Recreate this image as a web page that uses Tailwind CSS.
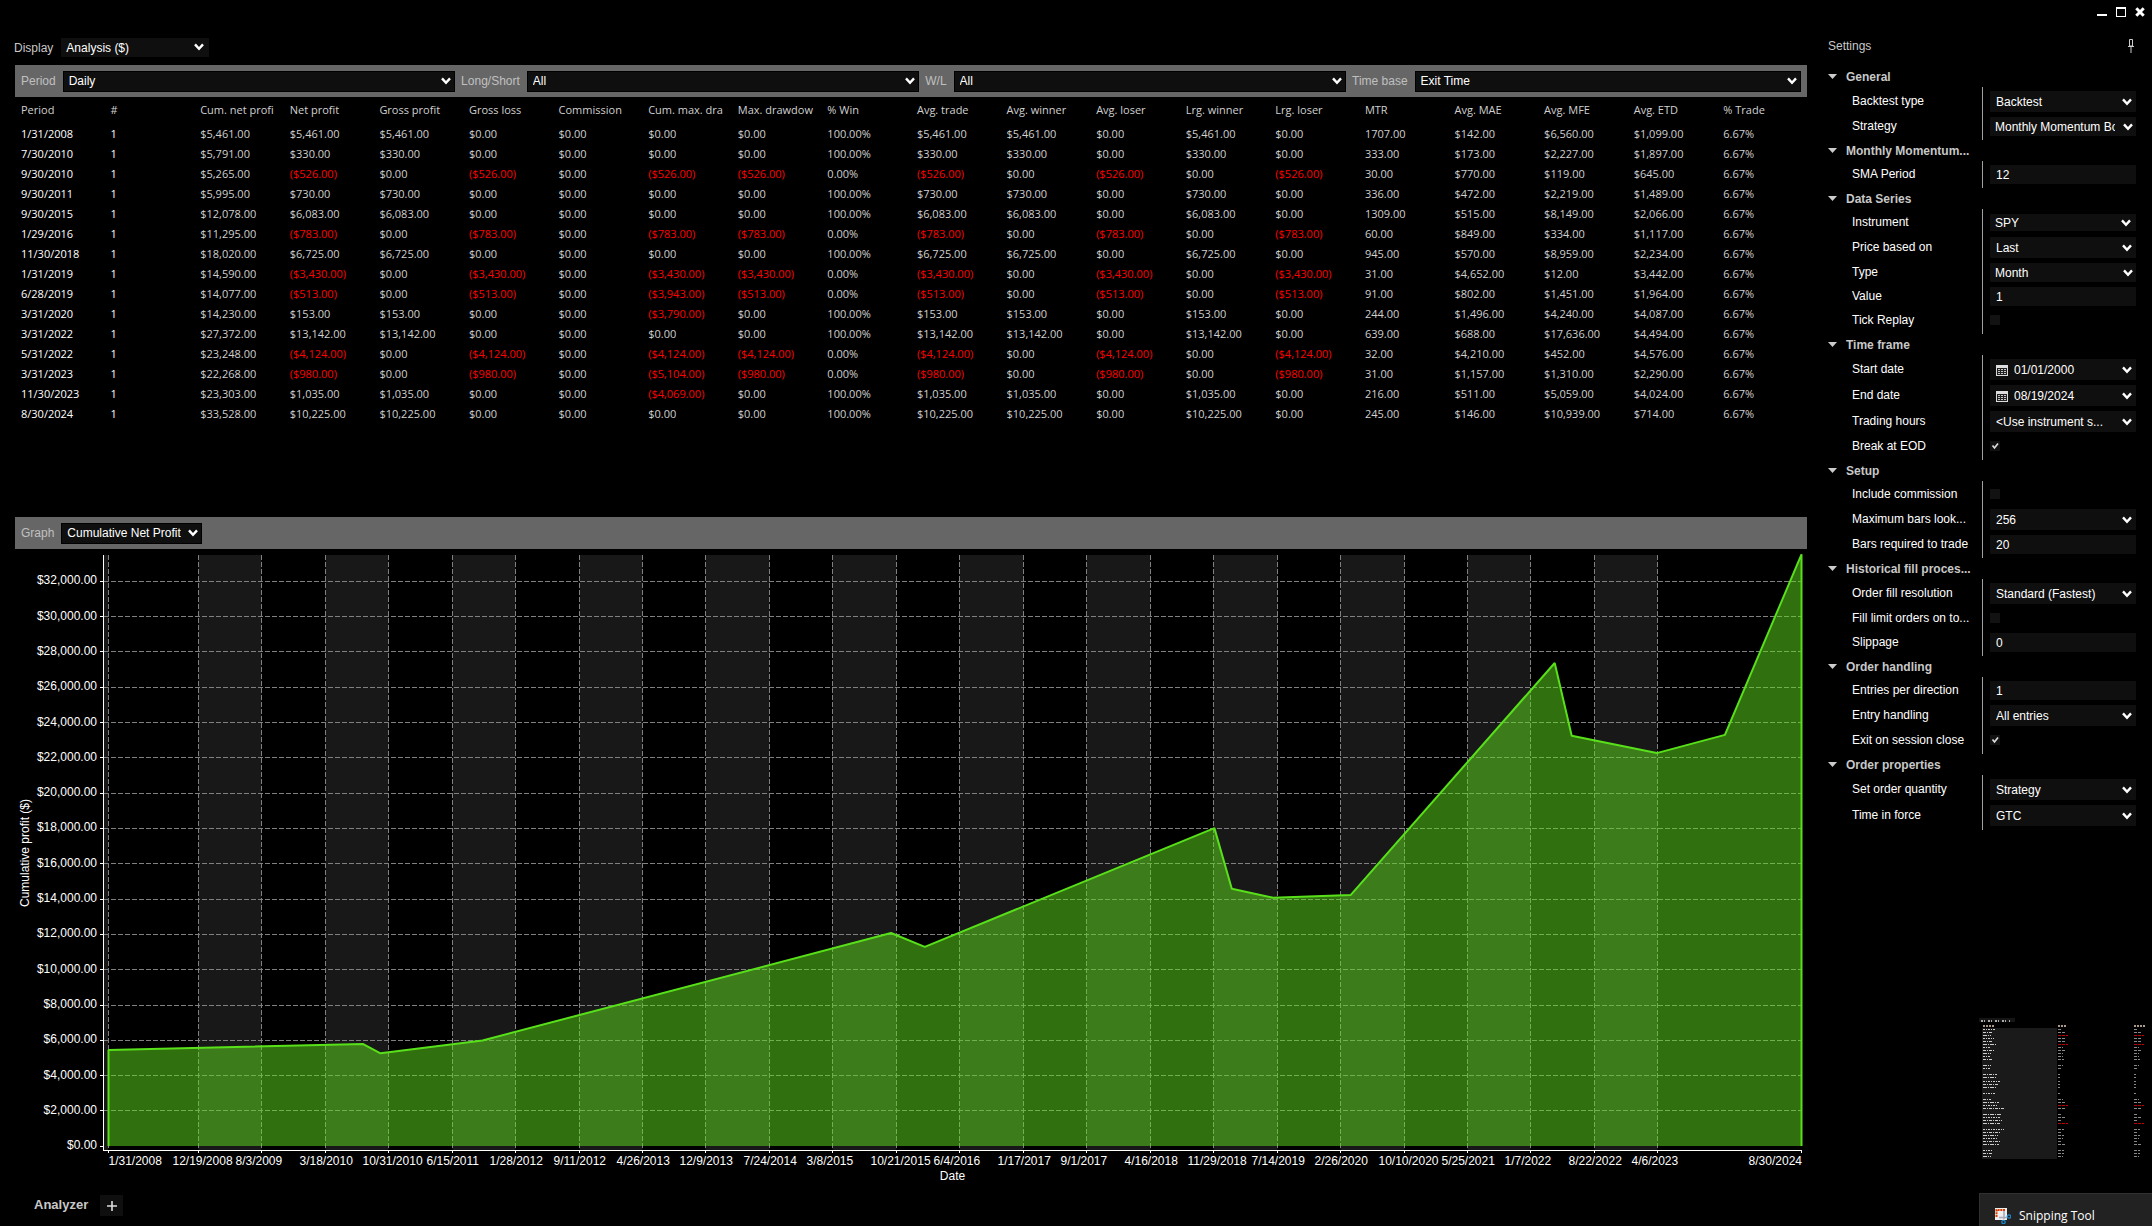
<!DOCTYPE html>
<html lang="en">
<head>
<meta charset="utf-8">
<title>Strategy Analyzer</title>
<script src="https://cdn.jsdelivr.net/npm/@tailwindcss/browser@4"></script>
</head>
<body class="relative flex min-h-screen flex-col bg-black font-['Liberation_Sans',Arial,sans-serif] text-xs text-white">

<header class="flex h-6 justify-end gap-[9px] pr-[7px] pt-[7px]">
  <button aria-label="Minimize" class="h-[10px] w-[10px]"><svg class="h-[10px] w-[10px]" viewBox="0 0 10 10"><path d="M0 8h10" stroke="#fff" stroke-width="2"/></svg></button>
  <button aria-label="Maximize" class="h-[10px] w-[10px]"><svg class="h-[10px] w-[10px]" viewBox="0 0 10 10" shape-rendering="crispEdges"><path d="M.5 .5h9v9h-9z" fill="none" stroke="#fff"/><path d="M0 1h10" stroke="#fff" stroke-width="2"/></svg></button>
  <button aria-label="Close" class="h-[10px] w-[10px]"><svg class="h-[10px] w-[10px]" viewBox="0 0 10 10"><path d="M1.3 1.3l7.4 7.4M8.7 1.3l-7.4 7.4" stroke="#fff" stroke-width="3"/></svg></button>
</header>

<div class="flex flex-1">
  <main class="flex min-w-0 flex-1 flex-col pl-[15px]">
    <div class="-ml-px flex items-center gap-2 pt-[14px]">
      <label for="display" class="text-[#c8c8c8]">Display</label>
      <div class="relative h-[19px] w-[148px]">
        <select id="display" class="block h-full w-full appearance-none bg-[#0f0f0f] pl-[5px] pr-5 outline-none"><option>Analysis ($)</option></select>
        <svg class="pointer-events-none absolute right-[5px] top-[5px] h-2 w-[10px]" viewBox="0 0 10 8"><path d="M1 1.4l4 4.4 4-4.4" fill="none" stroke="#fff" stroke-width="2.4"/></svg>
      </div>
    </div>

    <div id="filters" class="mt-2 flex h-8 items-center gap-[6px] bg-[#666] px-[6px] text-[#c0c0c0]"></div>

    <div class="pb-[92px]">
      <table class="w-full table-fixed border-collapse whitespace-nowrap font-['Open_Sans','Noto_Sans',sans-serif] text-[11px] leading-[18px] text-[#d0d0d0]">
        <thead><tr id="head" class="h-7 text-left"></tr></thead>
        <tbody id="rows"></tbody>
      </table>
    </div>

    <div class="flex h-8 items-center gap-[7px] bg-[#666] px-[6px] text-[#c0c0c0]">
      <label for="graph">Graph</label>
      <div class="relative h-[21px] w-[141px]">
        <select id="graph" class="block h-full w-full appearance-none border border-black bg-[#0f0f0f] pl-[5px] pr-5 text-white outline-none"><option>Cumulative Net Profit</option></select>
        <svg class="pointer-events-none absolute right-1 top-[6px] h-2 w-[10px]" viewBox="0 0 10 8"><path d="M1 1.4l4 4.4 4-4.4" fill="none" stroke="#fff" stroke-width="2.4"/></svg>
      </div>
    </div>

    <div class="flex flex-1 pr-[5px] pt-[6px]">
      <div class="relative w-[88px]" id="yaxis">
        <div class="absolute left-[2px] top-1/2 -translate-y-1/2 rotate-180 whitespace-nowrap leading-4 [writing-mode:vertical-rl]">Cumulative profit ($)</div>
      </div>
      <svg id="plot" class="min-w-0 flex-1 overflow-visible" viewBox="0 0 1699 596" preserveAspectRatio="none" role="img" aria-label="Cumulative net profit by date"></svg>
    </div>
    <div class="pb-[11px] pl-[88px] pr-[5px] pt-[3px]">
      <div id="xaxis" class="relative h-[15px] leading-[15px]"></div>
      <div class="h-[15px] text-center leading-[15px]">Date</div>
    </div>

    <footer class="flex h-[31px] items-start gap-3 pl-[19px]">
      <a href="#" class="text-[13px] font-bold leading-5 text-[#c8c8c8]">Analyzer</a>
      <button aria-label="New tab" class="flex h-[21px] w-[23px] items-center justify-center bg-[#0f0f0f]"><svg class="h-[10px] w-[10px]" viewBox="0 0 10 10"><path d="M0 5h10M5 0v10" stroke="#ddd" stroke-width="1.6"/></svg></button>
    </footer>
  </main>

  <aside class="w-[345px] pl-[21px] pr-4">
    <div class="flex h-[42px] items-center justify-between pt-[2px] text-[#c8c8c8]">
      <h2>Settings</h2>
      <button aria-label="Pin" class="mr-[2px] h-[14px] w-[6px]"><svg class="h-[14px] w-[6px]" viewBox="0 0 6 14" fill="none" stroke="#ccc"><path d="M1.5 .5h3v6.500h-3zM0 7.500h6M3 8v6"/></svg></button>
    </div>
    <div id="settings"></div>
  </aside>
</div>

<!-- Taskbar preview over the window's lower right corner -->
<div class="absolute bottom-0 right-0 w-[173px]">
  <svg id="thumb" class="mb-[32px] block h-[148px] w-[173px]" viewBox="0 0 173 148" shape-rendering="crispEdges"></svg>
  <div class="flex h-[33px] items-end gap-2 border-l border-t border-[#303030] bg-[#222] pl-[15px] font-['Open_Sans','Noto_Sans',sans-serif]">
    <svg class="mb-[2px] h-4 w-4" viewBox="0 0 16 16"><path d="M0 0h12v12H0z" fill="#eee"/><path d="M1.500 9V2h9" fill="none" stroke="#d83b01" stroke-width="2" stroke-dasharray="2 .7"/><path d="M9 3v8M4 9.500h8" stroke="#aab" stroke-width="1.6"/><circle cx="14" cy="8.500" r="1.700" fill="none" stroke="#1a86c8" stroke-width="1.300"/><circle cx="8.500" cy="14" r="1.700" fill="none" stroke="#1a86c8" stroke-width="1.300"/></svg>
    <span class="text-xs leading-5">Snipping Tool</span>
  </div>
</div>

<script>
const $ = id => document.getElementById(id);
const esc = s => s.replace('<', '&lt;');
const chevron = cls => `<svg class="${cls}" viewBox="0 0 10 8"><path d="M1 1.4l4 4.4 4-4.4" fill="none" stroke="#fff" stroke-width="2.4"/></svg>`;

/* Filter bar */
$('filters').innerHTML = [['Period', 'Daily', 392], ['Long/Short', 'All', 392], ['W/L', 'All', 392], ['Time base', 'Exit Time', 386]].map(([label, value, grow], i) => `
  <label for="f${i}" class="mr-px">${label}</label>
  <div class="relative h-[21px] w-0" style="flex-grow:${grow}">
    <select id="f${i}" class="block h-full w-full appearance-none border border-black bg-[#0f0f0f] pl-[5px] pr-5 text-white outline-none"><option>${value}</option></select>
    ${chevron('pointer-events-none absolute right-1 top-[6px] h-2 w-[10px]')}
  </div>`).join('');

/* Results table */
const cols = ['Period', '#', 'Cum. net profi', 'Net profit', 'Gross profit', 'Gross loss', 'Commission', 'Cum. max. dra', 'Max. drawdow', '% Win', 'Avg. trade', 'Avg. winner', 'Avg. loser', 'Lrg. winner', 'Lrg. loser', 'MTR', 'Avg. MAE', 'Avg. MFE', 'Avg. ETD', '% Trade'];
$('head').innerHTML = cols.map(c => `<th scope="col" class="px-[6px] pb-[2px] pt-0 font-normal">${c}</th>`).join('');
/* date, cumulative, net, cumulative drawdown, MTR, MAE, MFE, ETD */
const trades = [
  ['1/31/2008', 5461, 5461, 0, 1707, 142, 6560, 1099],
  ['7/30/2010', 5791, 330, 0, 333, 173, 2227, 1897],
  ['9/30/2010', 5265, -526, -526, 30, 770, 119, 645],
  ['9/30/2011', 5995, 730, 0, 336, 472, 2219, 1489],
  ['9/30/2015', 12078, 6083, 0, 1309, 515, 8149, 2066],
  ['1/29/2016', 11295, -783, -783, 60, 849, 334, 1117],
  ['11/30/2018', 18020, 6725, 0, 945, 570, 8959, 2234],
  ['1/31/2019', 14590, -3430, -3430, 31, 4652, 12, 3442],
  ['6/28/2019', 14077, -513, -3943, 91, 802, 1451, 1964],
  ['3/31/2020', 14230, 153, -3790, 244, 1496, 4240, 4087],
  ['3/31/2022', 27372, 13142, 0, 639, 688, 17636, 4494],
  ['5/31/2022', 23248, -4124, -4124, 32, 4210, 452, 4576],
  ['3/31/2023', 22268, -980, -5104, 31, 1157, 1310, 2290],
  ['11/30/2023', 23303, 1035, -4069, 216, 511, 5059, 4024],
  ['8/30/2024', 33528, 10225, 0, 245, 146, 10939, 714]];
const money = n => n < 0 ? `($${(-n).toLocaleString('en-US')}.00)` : `$${n.toLocaleString('en-US')}.00`;
$('rows').innerHTML = trades.map(([d, cum, net, dd, mtr, mae, mfe, etd]) => {
  const win = Math.max(net, 0), loss = Math.min(net, 0);
  const cells = [d, '1', money(cum), money(net), money(win), money(loss), money(0), money(dd), money(loss), net > 0 ? '100.00%' : '0.00%', money(net), money(win), money(loss), money(win), money(loss), mtr + '.00', money(mae), money(mfe), money(etd), '6.67%'];
  return '<tr class="h-5 align-top">' + cells.map((c, i) => `<td class="${i < 2 ? 'px-[6px] py-0 text-white' : c[0] === '(' ? 'px-[6px] py-0 text-[#ff0000]' : 'px-[6px] py-0'}">${c}</td>`).join('') + '</tr>';
}).join('');

/* Chart */
const W = 1699, H = 596, zero = 591.3;
const day = s => { const [m, d, y] = s.split('/'); return Date.UTC(y, m - 1, d) / 864e5; };
const d0 = day('1/31/2008'), d1 = day('8/30/2024');
const X = s => 5.5 + (day(s) - d0) / (d1 - d0) * 1693;
const Y = v => zero - v * 565 / 32000;
const ticks = ['1/31/2008', '12/19/2008', '8/3/2009', '3/18/2010', '10/31/2010', '6/15/2011', '1/28/2012', '9/11/2012', '4/26/2013', '12/9/2013', '7/24/2014', '3/8/2015', '10/21/2015', '6/4/2016', '1/17/2017', '9/1/2017', '4/16/2018', '11/29/2018', '7/14/2019', '2/26/2020', '10/10/2020', '5/25/2021', '1/7/2022', '8/22/2022', '4/6/2023', '8/30/2024'];
const tx = ticks.map(t => Math.floor(X(t) - .5) + .5);
let g = `<rect x="1" y="0" width="4" height="595" fill="#181818"/>`;
for (let i = 1; i < 24; i += 2) g += `<rect x="${tx[i]}" y="0" width="${tx[i + 1] - tx[i]}" height="595" fill="#181818"/>`;
g += '<g stroke="#808080" stroke-dasharray="5 2" shape-rendering="crispEdges">';
for (let v = 2000; v <= 32000; v += 2000) { const y = Math.floor(Y(v)) + .5; g += `<path d="M1 ${y}H1699"/>`; }
tx.slice(0, -1).forEach(x => g += `<path d="M${x} 0V595"/>`);
g += '</g><g stroke="#fff" shape-rendering="crispEdges"><path d="M.5 0V596M0 595.5H1699"/>';
for (let v = 0; v <= 32000; v += 2000) { const y = Math.floor(Y(v)) + .5; g += `<path d="M-3 ${y}H0"/>`; }
tx.forEach(x => g += `<path d="M${x} 596V598"/>`);
g += '</g>';
const pts = trades.map(t => X(t[0]).toFixed(1) + ' ' + Y(t[1]).toFixed(1)).join('L');
const line = `M5.5 591L${pts}V591`;
g += `<path d="${line}z" fill="#60e01e" fill-opacity=".5"/><path d="${line}" fill="none" stroke="#58e01a" stroke-width="2" stroke-linejoin="bevel" vector-effect="non-scaling-stroke"/>`;
$('plot').innerHTML = g;

let yl = '';
for (let v = 0; v <= 32000; v += 2000) yl += `<span class="absolute right-[6px] -translate-y-1/2 pb-[2px] leading-4" style="top:${Y(v) / H * 100}%">${money(v)}</span>`;
$('yaxis').insertAdjacentHTML('beforeend', yl);
$('xaxis').innerHTML = ticks.map((t, i) => i === ticks.length - 1
  ? `<span class="absolute right-0">${t}</span>`
  : `<span class="${i ? 'absolute -ml-[26px]' : 'absolute'}" style="left:${tx[i] / W * 100}%">${t}</span>`).join('');

/* Settings: S = drop-down, s = compact drop-down, i = instrument, D = date, t = text, c = tick box */
const groups = [
  ['General', [['Backtest type', 'S', 'Backtest'], ['Strategy', 's', 'Monthly Momentum Bot']]],
  ['Monthly Momentum...', [['SMA Period', 't', '12']]],
  ['Data Series', [['Instrument', 'i', 'SPY'], ['Price based on', 'S', 'Last'], ['Type', 's', 'Month'], ['Value', 't', '1'], ['Tick Replay', 'c', '']]],
  ['Time frame', [['Start date', 'D', '01/01/2000'], ['End date', 'D', '08/19/2024'], ['Trading hours', 'S', '<Use instrument s...'], ['Break at EOD', 'c', 'on']]],
  ['Setup', [['Include commission', 'c', ''], ['Maximum bars look...', 'S', '256'], ['Bars required to trade', 't', '20']]],
  ['Historical fill proces...', [['Order fill resolution', 'S', 'Standard (Fastest)'], ['Fill limit orders on to...', 'c', ''], ['Slippage', 't', '0']]],
  ['Order handling', [['Entries per direction', 't', '1'], ['Entry handling', 'S', 'All entries'], ['Exit on session close', 'c', 'on']]],
  ['Order properties', [['Set order quantity', 'S', 'Strategy'], ['Time in force', 'S', 'GTC']]]];
const calendar = '<svg class="pointer-events-none absolute left-[6px] top-[6px] h-[11px] w-3" viewBox="0 0 12 11" shape-rendering="crispEdges"><path d="M0 0h12v11H0z" fill="#ddd"/><path d="M1 3h10v7H1z" fill="#222"/><path d="M2 4.500h8M2 6.500h8M2 8.500h8" stroke="#ccc" stroke-dasharray="2 1"/></svg>';
const box = {
  S: 'relative h-[21px]', D: 'relative h-[21px]', s: 'relative h-[19px]', i: 'relative mt-px h-[17px]', t: 'h-[19px]', c: 'relative mt-1 h-[10px] w-[10px]'
};
const arrow = {
  S: 'pointer-events-none absolute right-1 top-[7px] h-2 w-[10px]', D: 'pointer-events-none absolute right-1 top-[7px] h-2 w-[10px]',
  s: 'pointer-events-none absolute right-[3px] top-[6px] h-2 w-[10px]', i: 'pointer-events-none absolute right-[5px] top-[5px] h-2 w-[10px]'
};
let n = 0;
const control = (kind, value, id) => {
  if (kind === 't') return `<input id="${id}" type="text" value="${value}" class="block h-full w-full bg-[#0f0f0f] px-[6px] outline-none">`;
  if (kind === 'c') return `<input id="${id}" type="checkbox" ${value ? 'checked' : ''} class="peer block h-full w-full appearance-none bg-[#121212]"><svg class="pointer-events-none absolute inset-0 hidden h-[10px] w-[10px] peer-checked:block" viewBox="0 0 10 10"><path d="M2.500 4.500l2 2.500 3.500-4.500" fill="none" stroke="#ddd" stroke-width="1.700"/></svg>`;
  const pad = kind === 'D' ? 'pl-6 pr-[21px]' : kind === 'S' ? 'pl-[6px] pr-[21px]' : 'pl-[5px] pr-[21px]';
  return `<select id="${id}" class="block h-full w-full appearance-none overflow-hidden bg-[#0f0f0f] outline-none ${pad}"><option>${esc(value)}</option></select>${kind === 'D' ? calendar : ''}${chevron(arrow[kind])}`;
};
$('settings').innerHTML = groups.map(([name, rows]) => `
  <section>
    <h3 class="flex h-[21px] items-center gap-[9px] font-bold text-[#c8c8c8]"><svg class="h-[5px] w-[9px]" viewBox="0 0 9 5"><path d="M0 0h9L4.500 5z" fill="#ccc"/></svg>${name}</h3>
    <div class="relative pb-px pt-[2px]">
      <div class="absolute inset-y-0 left-[154px] w-px bg-[#a0a0a0]"></div>
      ${rows.map(([label, kind, value]) => { const id = 's' + n++; return `
      <div class="${'SD'.includes(kind) ? 'flex h-[26px] pl-6' : 'flex h-6 pl-6'}">
        <label for="${id}" class="${'SD'.includes(kind) ? 'w-[138px] whitespace-nowrap leading-[25px]' : 'w-[138px] whitespace-nowrap leading-[23px]'}">${esc(label)}</label>
        <div class="min-w-0 flex-1 pt-[2px]"><div class="${box[kind]}">${control(kind, value, id)}</div></div>
      </div>`; }).join('')}
    </div>
  </section>`).join('');

/* Miniature of another window */
const ys = [16, 19, 22, 25, 28, 31, 34, 37, 40, 43, 46, 52, 55, 61, 64, 68, 71, 74, 80, 86, 89, 92, 95, 101, 104, 107, 110, 116, 119, 122, 125, 128, 131, 137, 140, 143];
const ws = [12, 10, 8, 11, 10, 13, 8, 11, 8, 8, 9, 8, 7, 14, 14, 17, 15, 14, 12, 8, 16, 14, 22, 19, 17, 19, 17, 21, 18, 15, 14, 18, 16, 9, 9, 8];
const red = [22, 31, 92, 110];
let t = '<rect x="0" y="5" width="36" height="4" fill="#151515"/><path d="M2 7.500h29" stroke="#aaa" stroke-width="2" stroke-dasharray="2 1 1 3"/><path d="M4 12.500h11M79 12.500h9M155 12.500h11" stroke="#a98" stroke-width="2" stroke-dasharray="2 1"/><rect x="3" y="15" width="75" height="131" fill="#1a1a1a"/>';
ys.forEach((y, i) => {
  t += `<path d="M4 ${y + .5}h${ws[i]}" stroke="#ccc" stroke-dasharray="${2 + i % 3} 1 1 1"/>`;
  const c = red.includes(y) ? '#c00000' : '#888', w = red.includes(y) ? 10 : i > 12 && i < 19 ? 2 : 3 + ws[i] % 6;
  t += `<path d="M79 ${y + .5}h${w}M155 ${y + .5}h${w}" stroke="${c}" stroke-dasharray="3 1"/>`;
});
$('thumb').innerHTML = t;
</script>
</body>
</html>
